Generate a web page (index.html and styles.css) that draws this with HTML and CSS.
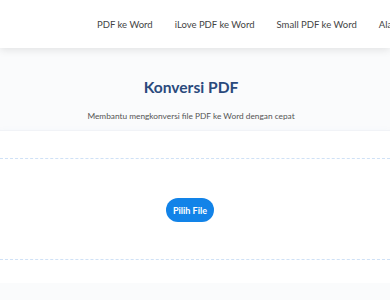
FILE: index.html
```html
<!DOCTYPE html>
<html lang="id">
<head>
<meta charset="utf-8">
<title>Konversi PDF</title>
<link rel="stylesheet" href="styles.css">
</head>
<body>
<header class="header">
  <nav class="nav">
    <a class="nav-link" href="#">PDF ke Word</a>
    <a class="nav-link" href="#">iLove PDF ke Word</a>
    <a class="nav-link" href="#">Small PDF ke Word</a>
    <a class="nav-link" href="#">Alat Lainnya</a>
  </nav>
</header>
<main class="main">
  <section class="hero">
    <h1 class="title">Konversi PDF</h1>
    <p class="subtitle">Membantu mengkonversi file PDF ke Word dengan cepat</p>
  </section>
  <section class="card">
    <div class="dropzone">
      <button class="btn" type="button">Pilih File</button>
    </div>
  </section>
</main>
</body>
</html>
```
FILE: styles.css
```css
* { box-sizing: border-box; }
html, body { margin: 0; padding: 0; overflow: hidden; }
body {
  font-family: Lato, "Open Sans", sans-serif;
  background: #fafbfc;
  width: 390px;
}
.header {
  height: 48px;
  background: #fff;
  box-shadow: 0 2px 8px rgba(0, 0, 0, 0.10);
  position: relative;
  z-index: 2;
  display: flex;
  align-items: center;
  overflow: hidden;
}
.nav {
  display: flex;
  gap: 22px;
  padding-left: 97px;
  white-space: nowrap;
}
.nav-link {
  font-size: 9.5px;
  color: #444;
  text-decoration: none;
}
.main { display: flex; flex-direction: column; }
.hero {
  padding: 28px 8px 0 0;
  height: 82px;
  text-align: center;
  background: #fafbfc;
}
.title {
  margin: 0;
  font-size: 15.6px;
  font-weight: 700;
  color: #2a4a7c;
  line-height: 22px;
}
.subtitle {
  margin: 12px 0 0;
  font-size: 8.3px;
  color: #555;
  line-height: 12px;
}
.card {
  background: #fff;
  border-top: 1px solid #f1f3f7;
  padding: 27px 0 23px;
  box-shadow: 0 5px 10px rgba(60, 120, 210, 0.10);
}
.dropzone {
  border-top: 1px dashed #cfe1f6;
  border-bottom: 1px dashed #cfe1f6;
  height: 102px;
  padding-right: 10px;
  display: flex;
  align-items: center;
  justify-content: center;
}
.btn {
  font-family: inherit;
  font-size: 9px;
  font-weight: 700;
  color: #fff;
  background: #1283e8;
  border: none;
  border-radius: 12px;
  height: 24px;
  width: 48px;
  padding: 0;
  margin-top: 2px;
}
```
